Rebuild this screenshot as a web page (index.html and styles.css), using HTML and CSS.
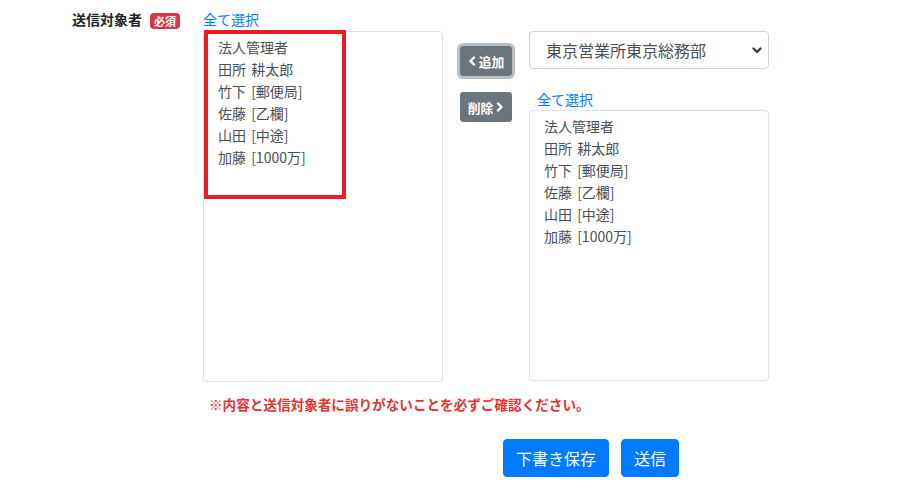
FILE: index.html
```html
<!DOCTYPE html>
<html lang="ja">
<head>
  <meta charset="UTF-8">
  <meta name="viewport" content="width=device-width, initial-scale=1.0">
  <title>送信対象者</title>
  <link rel="stylesheet" href="styles.css">
</head>
<body>
  <div class="form-row">
    <div class="label-col">
      <span class="label">送信対象者</span>
      <span class="badge">必須</span>
    </div>

    <div class="list-col">
      <a href="#" class="select-all">全て選択</a>
      <div class="list-box list-tall">
        <div class="item">法人管理者</div>
        <div class="item">田所 耕太郎</div>
        <div class="item">竹下 [郵便局]</div>
        <div class="item">佐藤 [乙欄]</div>
        <div class="item">山田 [中途]</div>
        <div class="item">加藤 [1000万]</div>
      </div>
      <div class="highlight"></div>
    </div>

    <div class="move-col">
      <button class="btn-move btn-focus">
        <svg class="chev" viewBox="0 0 8 10"><polyline points="6,1.5 2.5,5 6,8.5"/></svg>追加
      </button>
      <button class="btn-move">
        削除<svg class="chev chev-right" viewBox="0 0 8 10"><polyline points="2,1.5 5.5,5 2,8.5"/></svg>
      </button>
    </div>

    <div class="list-col">
      <div class="select-wrap">
        <select class="dept-select">
          <option>東京営業所東京総務部</option>
        </select>
        <svg class="select-arrow" viewBox="0 0 10 7"><polyline points="1.5,1.5 5,5 8.5,1.5"/></svg>
      </div>
      <a href="#" class="select-all select-all-right">全て選択</a>
      <div class="list-box list-short">
        <div class="item">法人管理者</div>
        <div class="item">田所 耕太郎</div>
        <div class="item">竹下 [郵便局]</div>
        <div class="item">佐藤 [乙欄]</div>
        <div class="item">山田 [中途]</div>
        <div class="item">加藤 [1000万]</div>
      </div>
    </div>
  </div>

  <p class="notice">※内容と送信対象者に誤りがないことを必ずご確認ください。</p>

  <div class="actions">
    <button class="btn-primary">下書き保存</button>
    <button class="btn-primary">送信</button>
  </div>
</body>
</html>
```

FILE: styles.css
```css
body { margin: 0; background: #fff; color: #212529; font-family: "Noto Sans CJK JP", "Noto Sans", sans-serif; font-size: 14px; }

.form-row { display: flex; align-items: flex-start; padding: 9px 0 0 72px; }
.label-col { width: 131px; display: flex; align-items: flex-start; }
.label { font-weight: bold; font-size: 14px; line-height: 21px; }
.badge { margin: 4px 0 0 8px; padding: 0 4px; height: 16px; line-height: 16px; font-size: 11px; font-weight: bold; color: #fff; background: #dc3545; border-radius: 4px; }

.list-col { position: relative; width: 240px; display: flex; flex-direction: column; }
.select-all { display: block; color: #007bff; text-decoration: none; font-size: 14px; line-height: 21px; }
.select-all-right { margin: 20px 0 0 8px; }
.list-box { margin-top: 1px; box-sizing: border-box; border: 1px solid #dcdfe3; border-radius: 4px; padding: 4px 12px 6px 14px; color: #495057; }
.list-tall { height: 351px; }
.list-short { height: 271px; margin-top: 0; }
.item { font-size: 14px; line-height: 22px; white-space: nowrap; word-spacing: 2px; }
.highlight { position: absolute; left: 1px; top: 21px; width: 142px; height: 169px; box-sizing: border-box; border: 4px solid #ec1c24; }

.move-col { width: 86px; display: flex; flex-direction: column; align-items: center; gap: 16px; padding-top: 37px; }
.btn-move { display: flex; align-items: center; gap: 3px; height: 30px; padding: 0 7px; border: 1px solid #6c757d; border-radius: 3px; background: #6c757d; color: #fff; font-family: inherit; font-size: 12.8px; font-weight: bold; }
.btn-focus { box-shadow: 0 0 0 3px rgba(130, 138, 145, 0.55); }
.chev { width: 8px; height: 10px; fill: none; stroke: #fff; stroke-width: 2.4; stroke-linecap: round; stroke-linejoin: round; }

.select-wrap { position: relative; margin-top: 22px; }
.dept-select { -webkit-appearance: none; appearance: none; width: 100%; height: 38px; box-sizing: border-box; border: 1px solid #ced4da; border-radius: 4px; background: #fff; padding: 0 30px 0 16px; color: #495057; font-family: inherit; font-size: 16px; }
.select-arrow { position: absolute; right: 7px; top: 16px; width: 10px; height: 7px; fill: none; stroke: #343a40; stroke-width: 2.2; stroke-linecap: round; stroke-linejoin: round; pointer-events: none; }

.notice { margin: 12px 0 0 209px; color: #e3342f; font-weight: bold; font-size: 13.6px; line-height: 20px; }

.actions { display: flex; gap: 12px; margin-top: 25px; padding-left: 503px; }
.btn-primary { height: 38px; padding: 0 12px; border: 1px solid #007bff; border-radius: 4px; background: #007bff; color: #fff; font-family: inherit; font-size: 16px; }
```
